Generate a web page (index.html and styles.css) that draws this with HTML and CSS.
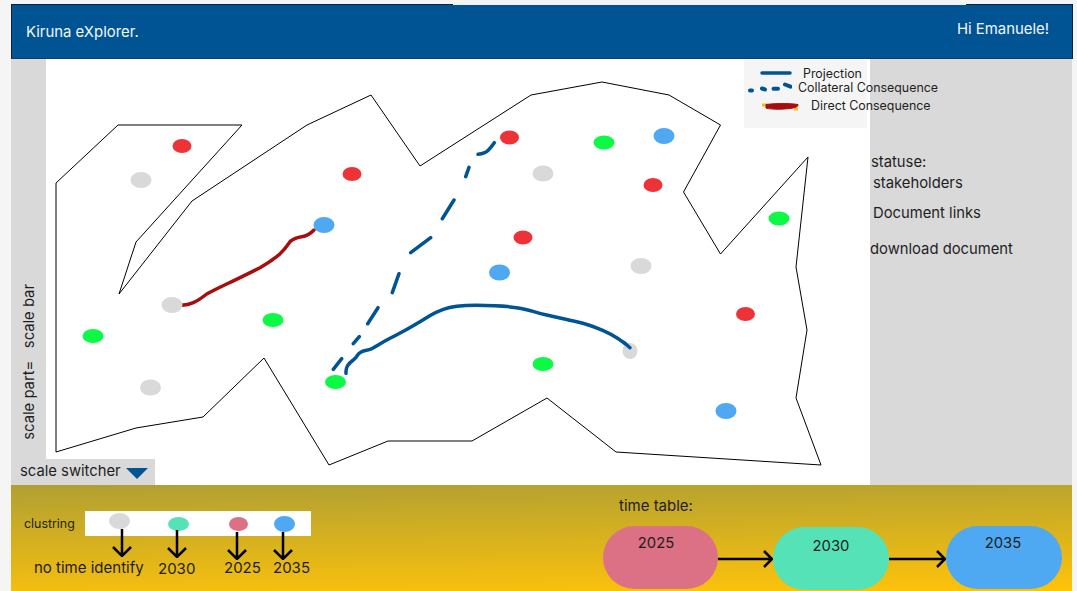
FILE: index.html
```html
<!DOCTYPE html>
<html lang="en">
<head>
<meta charset="utf-8">
<title>Kiruna eXplorer</title>
<link rel="stylesheet" href="styles.css">
</head>
<body>
<div class="app">
  <header class="topbar">
    <span class="brand">Kiruna eXplorer.</span>
    <span class="greeting">Hi Emanuele!</span>
  </header>
  <main class="workspace">
    <aside class="scale-rail">
      <span class="scale-text">scale part=&nbsp;&nbsp;&nbsp;scale bar</span>
    </aside>
    <section class="map">
      <svg class="map-canvas" viewBox="46 59 824 426" width="824" height="426">
        <polygon class="region" points="56,452 56,183 118,125 242,125 136,242 119,294 192,201 307,125 371,95 420,166 531,95 602,82 669,95 720.5,125 683.5,192 720.5,254 808,157 796,267 807,330 796,398 821,465 616,452 547,398 472,441 388,441 329,465 264,358 203,417 136,428"/>
        <path class="link-direct" d="M181.7 305.3Q188 305 193.3 302.7T206.7 294Q216 289 226.7 284T260 267.7Q270 262 276.7 256.7T290 241.7Q295 237.5 301.7 236.7T314 230"/>
        <path class="link-solid" d="M346 373.3C345.5 367 348 364 353.3 360S356 355 360.7 352.3 367 351 371.7 348.7 381 343 390 338.3 403.3 331.7 420 321.7 433 313 443.3 309.3 465 305.3 476 305.3 505 305.5 520 308.3 533 312 546.7 315 566 319.5 576.7 321.7 595 327 603.3 330.7 620 339 630 347.7"/>
        <path class="link-dashed" d="M333.3 369.3L341.7 358.7M353.3 343.7L359.3 336.7M367.7 323.7L378 307.7M392.3 292.7L399 273.7M410.7 252.7L430.7 237.7M442.3 218.7L454 200M465.7 176.7L469 167.3M478 154.3Q485 153.5 488 150.5T494.3 142.7"/>
        <g class="dot-red">
          <ellipse cx="182" cy="146" rx="9.5" ry="7"/><ellipse cx="352" cy="174" rx="9.5" ry="7"/><ellipse cx="509.500" cy="137.500" rx="9.5" ry="7"/><ellipse cx="653" cy="185" rx="9.5" ry="7"/><ellipse cx="523" cy="237.500" rx="9.5" ry="7"/><ellipse cx="745.500" cy="314" rx="9.500" ry="7"/>
        </g>
        <g class="dot-gray">
          <ellipse cx="141" cy="180" rx="10.500" ry="8"/><ellipse cx="543" cy="173.500" rx="10.500" ry="8"/><ellipse cx="641" cy="266" rx="10.500" ry="8"/><ellipse cx="172" cy="305" rx="10.500" ry="8"/><ellipse cx="150.500" cy="387.500" rx="10.500" ry="8"/>
        </g>
        <g class="dot-green">
          <ellipse cx="604" cy="142.500" rx="10.500" ry="7"/><ellipse cx="779" cy="218.500" rx="10.500" ry="7"/><ellipse cx="93" cy="336" rx="10.500" ry="7"/><ellipse cx="273" cy="320" rx="10.500" ry="7"/><ellipse cx="543" cy="364" rx="10.500" ry="7"/><ellipse cx="335.500" cy="382" rx="10.500" ry="7"/>
        </g>
        <g class="dot-blue">
          <ellipse cx="664" cy="136" rx="10.500" ry="8"/><ellipse cx="324" cy="225" rx="10.500" ry="8"/><ellipse cx="499.500" cy="272.500" rx="10.500" ry="8"/><ellipse cx="726" cy="411" rx="10.500" ry="8"/>
        </g>
        <ellipse class="dot-gray-small" cx="630" cy="351" rx="7.500" ry="8"/>
        <path class="link-solid" d="M624 342.500L630 347.700"/>
      </svg>
      <div class="legend">
        <div class="legend-row legend-projection">
          <svg class="legend-mark" width="32" height="6" viewBox="0 0 32 6"><path class="key-solid" d="M2 3H30"/></svg>
          <span>Projection</span>
        </div>
        <div class="legend-row legend-collateral">
          <svg class="legend-mark" width="44" height="12" viewBox="0 0 44 12"><path class="key-dashed" d="M2 9.500H4M14 7.500L17 8.500M25.500 7.700H30M37 3.500L42.500 5.700"/></svg>
          <span>Collateral Consequence</span>
        </div>
        <div class="legend-row legend-direct">
          <svg class="legend-mark" width="40" height="12" viewBox="0 0 40 12"><path class="key-amber" d="M2 6H7M34 10H38"/><path class="key-red" d="M6 5.500C14 4.500 28 4 38 5.500 38.500 8 34 9.500 24 10 16 10.500 8 10 6 9Z"/></svg>
          <span>Direct Consequence</span>
        </div>
      </div>
    </section>
    <aside class="details">
      <p class="detail detail-status">statuse:</p>
      <p class="detail detail-stake">stakeholders</p>
      <p class="detail detail-links">Document links</p>
      <p class="detail detail-download">download document</p>
    </aside>
    <div class="scale-switcher">
      <span>scale switcher</span>
      <svg width="22" height="11" viewBox="0 0 22 11"><path class="caret" d="M0 0H22L11 11Z"/></svg>
    </div>
  </main>
  <footer class="timeline">
    <div class="clusters">
      <span class="clusters-title">clustring</span>
      <div class="clusters-key">
        <div class="key-bar">
          <span class="key-dot key-none"></span>
          <span class="key-dot key-2030"></span>
          <span class="key-dot key-2025"></span>
          <span class="key-dot key-2035"></span>
        </div>
        <div class="key-arrows">
          <svg class="down down-a" width="20" height="28" viewBox="0 0 20 28"><path d="M10 0V27M1 18L10 27 19 18"/></svg>
          <svg class="down down-b" width="20" height="28" viewBox="0 0 20 28"><path d="M10 0V27M1 18L10 27 19 18"/></svg>
          <svg class="down down-c" width="20" height="28" viewBox="0 0 20 28"><path d="M10 0V27M1 18L10 27 19 18"/></svg>
          <svg class="down down-d" width="20" height="28" viewBox="0 0 20 28"><path d="M10 0V27M1 18L10 27 19 18"/></svg>
        </div>
        <div class="key-labels">
          <span class="label-none">no time identify</span>
          <span class="label-2030">2030</span>
          <span class="label-2025">2025</span>
          <span class="label-2035">2035</span>
        </div>
      </div>
    </div>
    <div class="schedule">
      <span class="schedule-title">time table:</span>
      <div class="schedule-flow">
        <div class="pill pill-2025">2025</div>
        <svg class="flow-arrow" width="55" height="20" viewBox="0 0 55 20"><path d="M0 10H54M46 2L54 10 46 18"/></svg>
        <div class="pill pill-2030">2030</div>
        <svg class="flow-arrow" width="57" height="20" viewBox="0 0 57 20"><path d="M0 10H56M48 2L56 10 48 18"/></svg>
        <div class="pill pill-2035">2035</div>
      </div>
    </div>
  </footer>
</div>
</body>
</html>
```

FILE: styles.css
```css
* {
  box-sizing: border-box;
}

html,
body {
  margin: 0;
  height: 591px;
  overflow: hidden;
  background: #f5f5f5;
  font-family: Inter, "Liberation Sans", sans-serif;
  color: #1e1e1e;
}

.app {
  display: flex;
  flex-direction: column;
  width: 1062px;
  height: 587px;
  margin: 4px 0 0 11px;
}

.topbar {
  position: relative;
  display: flex;
  justify-content: space-between;
  flex: 0 0 55px;
  padding: 15px 23px 0 14px;
  background: #005494;
  border: 1px solid #0d2238;
  border-bottom-color: #1a3a58;
  color: #f2f6fa;
  font-size: 14.900px;
}

.topbar::before {
  content: "";
  position: absolute;
  top: -1px;
  left: 441px;
  width: 513px;
  height: 1px;
  background: #f0f0f0;
}

.brand {
  padding-top: 3px;
}

.workspace {
  position: relative;
  display: flex;
  flex: 0 0 426px;
  width: 1061px;
}

.scale-rail {
  display: flex;
  flex: 0 0 35px;
  align-items: flex-end;
  justify-content: center;
  padding: 0 0 45px 1px;
  background: #d9d9d9;
}

.scale-text {
  writing-mode: vertical-rl;
  transform: rotate(180deg);
  font-size: 14.800px;
  white-space: nowrap;
}

.map {
  position: relative;
  flex: 0 0 824px;
  background: #fff;
}

.map-canvas {
  display: block;
}

.region {
  fill: none;
  stroke: #000;
  stroke-width: 1;
}

.link-direct,
.link-solid,
.link-dashed {
  fill: none;
  stroke-width: 3.500;
  stroke-linecap: round;
  stroke-linejoin: round;
}

.link-direct {
  stroke: #a80d0d;
}

.link-solid,
.link-dashed {
  stroke: #005494;
}

.dot-red {
  fill: #ee3338;
}

.dot-gray,
.dot-gray-small {
  fill: #d9d9d9;
}

.dot-green {
  fill: #0cfa45;
}

.dot-blue {
  fill: #4fa8f2;
}

.legend {
  position: absolute;
  top: 1px;
  left: 698px;
  width: 123px;
  height: 68px;
  background: #f5f5f5;
  font-size: 12.400px;
  white-space: nowrap;
}

.legend-row {
  display: flex;
  align-items: center;
  height: 14px;
}

.legend-mark {
  flex: none;
}

.legend-projection {
  margin-top: 6px;
  padding-left: 16px;
  gap: 11px;
}

.legend-collateral {
  padding-left: 4px;
  gap: 6px;
}

.legend-direct {
  margin-top: 4px;
  padding-left: 16px;
  gap: 11px;
}

.key-solid,
.key-dashed {
  fill: none;
  stroke: #005494;
  stroke-linecap: round;
}

.key-solid {
  stroke-width: 3.500;
}

.key-dashed {
  stroke-width: 4;
}

.key-amber {
  fill: none;
  stroke: #fdb813;
  stroke-width: 3;
}

.key-red {
  fill: #a80d0d;
  stroke: #a80d0d;
  stroke-width: 1;
  stroke-linejoin: round;
}

.details {
  flex: 1;
  padding-top: 94px;
  background: #d9d9d9;
  font-size: 14.800px;
}

.detail {
  margin: 0;
  line-height: 18px;
  white-space: nowrap;
}

.detail-status {
  padding-left: 1px;
}

.detail-stake {
  margin-top: 3px;
  padding-left: 3px;
}

.detail-links {
  margin-top: 12px;
  padding-left: 3px;
}

.detail-download {
  margin-top: 18px;
}

.scale-switcher {
  position: absolute;
  left: 0;
  bottom: 0;
  display: flex;
  align-items: center;
  gap: 5px;
  width: 144px;
  height: 26px;
  padding: 0 0 3px 9px;
  background: #d9d9d9;
  font-size: 14.800px;
}

.caret {
  fill: #005494;
}

.scale-switcher svg {
  margin-top: 5px;
}

.timeline {
  display: flex;
  flex: 0 0 106px;
  width: 1061px;
  background: linear-gradient(179deg, #b0a033 0%, #ffc30a 100%);
}

.clusters {
  display: flex;
  flex: 0 0 592px;
  padding: 26px 0 0 13px;
}

.clusters-title {
  flex: 0 0 61px;
  padding-top: 5px;
  font-size: 12.400px;
  line-height: 15px;
}

.clusters-key {
  flex: 1;
}

.key-bar {
  display: flex;
  align-items: center;
  width: 226px;
  height: 25px;
  background: #fff;
}

.key-dot {
  display: block;
  height: 16px;
  border-radius: 50%;
  flex: none;
}

.key-none {
  width: 21px;
  margin: -5px 0 0 24px;
  background: #d9d9d9;
}

.key-2030 {
  width: 21px;
  height: 14px;
  margin: 0 0 0 38px;
  background: #54e2b6;
}

.key-2025 {
  width: 19px;
  height: 14px;
  margin: 0 0 0 40px;
  background: #dc7084;
}

.key-2035 {
  width: 21px;
  height: 16px;
  margin: 0 0 0 26px;
  background: #4fa8f2;
}

.key-arrows {
  display: flex;
  height: 31px;
  margin-top: -7px;
}

.down {
  flex: none;
  fill: none;
  stroke: #000;
  stroke-width: 2.500;
}

.down-a {
  margin-left: 27px;
}

.down-b {
  margin: 1px 0 0 35px;
}

.down-c {
  margin: 3px 0 0 40px;
}

.down-d {
  margin: 3px 0 0 26px;
}

.key-labels {
  display: flex;
  margin-top: -1px;
  margin-left: -51px;
  font-size: 15px;
  line-height: 18px;
  white-space: nowrap;
}

.label-none {
  flex: 0 0 124px;
}

.label-2030 {
  flex: 0 0 66px;
  margin-top: 1px;
}

.label-2025 {
  flex: 0 0 49px;
}

.schedule {
  display: flex;
  flex-direction: column;
  flex: 1;
}

.schedule-title {
  margin: 12px 0 0 16px;
  font-size: 15px;
  line-height: 18px;
}

.schedule-flow {
  display: flex;
  align-items: center;
  margin-top: 10px;
}

.pill {
  flex: none;
  width: 116px;
  height: 63px;
  padding-top: 8px;
  border-radius: 32px;
  font-size: 14.800px;
  line-height: 18px;
  text-align: center;
}

.pill-2025 {
  width: 115px;
  background: #dc7084;
  padding-right: 9px;
}

.pill-2030 {
  margin-top: 2px;
  background: #54e2b6;
  padding-top: 10px;
}

.pill-2035 {
  background: #4fa8f2;
  padding-right: 2px;
}

.flow-arrow {
  flex: none;
  fill: none;
  stroke: #000;
  stroke-width: 2.500;
  margin-top: 3px;
}
```
